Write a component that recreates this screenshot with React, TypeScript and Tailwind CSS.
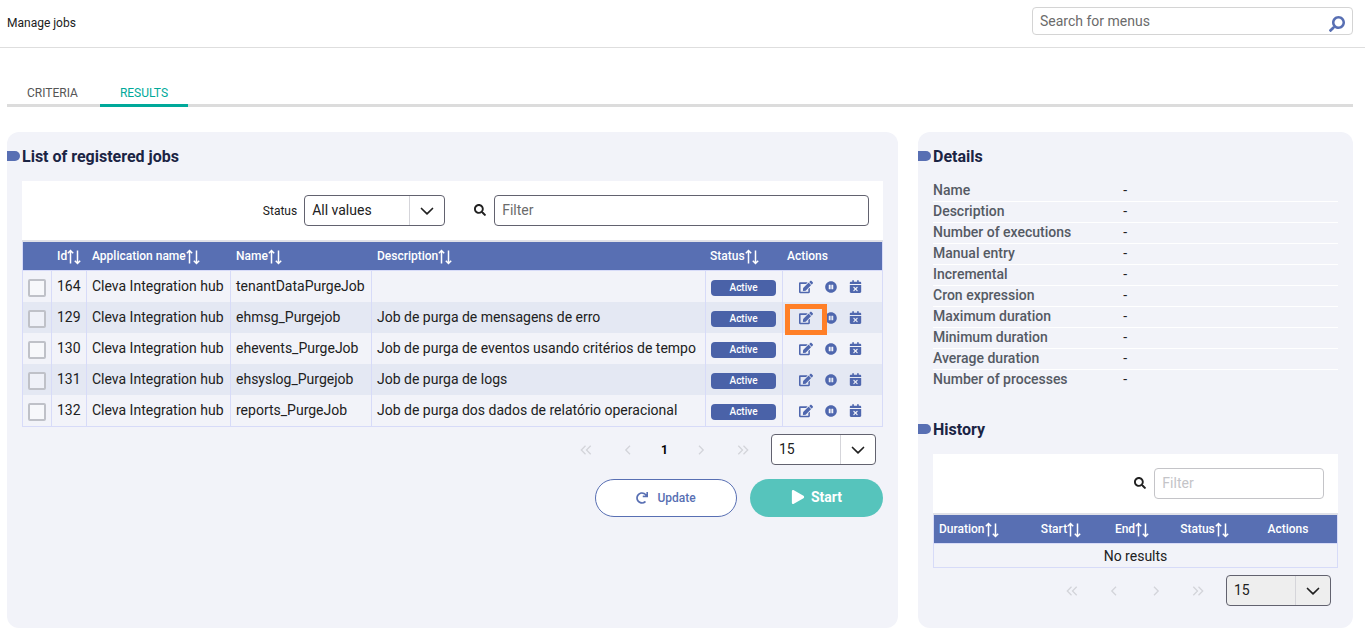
import type { ReactNode } from "react";
import { FaSearch, FaEdit, FaPauseCircle, FaPlay, FaRedo } from "react-icons/fa";
import { FaCalendarXmark } from "react-icons/fa6";

const jobs = [
  { id: 164, name: "tenantDataPurgeJob", description: "" },
  { id: 129, name: "ehmsg_Purgejob", description: "Job de purga de mensagens de erro", highlighted: true },
  { id: 130, name: "ehevents_PurgeJob", description: "Job de purga de eventos usando critérios de tempo" },
  { id: 131, name: "ehsyslog_Purgejob", description: "Job de purga de logs" },
  { id: 132, name: "reports_PurgeJob", description: "Job de purga dos dados de relatório operacional" },
];

const details = [
  "Name",
  "Description",
  "Number of executions",
  "Manual entry",
  "Incremental",
  "Cron expression",
  "Maximum duration",
  "Minimum duration",
  "Average duration",
  "Number of processes",
];

function SortIcon() {
  return (
    <svg width="14" height="16" viewBox="0 0 14 16" fill="none" stroke="currentColor" strokeWidth="1.5" className="mt-px shrink-0" aria-hidden="true">
      <path d="M3.5 14.5V1.5M0.8 4.2L3.5 1.5L6.2 4.2" />
      <path d="M10.5 1.5V14.5M7.8 11.8L10.5 14.5L13.2 11.8" />
    </svg>
  );
}

function SortHeader({ children }: { children: ReactNode }) {
  return (
    <button type="button" className="inline-flex items-center align-top h-7 font-medium">
      {children}
      <SortIcon />
    </button>
  );
}

function SectionTitle({ children }: { children: ReactNode }) {
  return (
    <div className="-ml-[15px] mb-[13px] flex h-6 items-center gap-0.5">
      <span className="h-2.5 w-[13px] rounded-r-full bg-[#586fb3]" />
      <h2 className="pt-0.5 text-base font-bold text-[#1b2444]">{children}</h2>
    </div>
  );
}

function Select({ label, value, id, muted }: { label: string; value: string; id: string; muted?: boolean }) {
  return (
    <div className="relative h-[31px] w-full">
      <select
        id={id}
        aria-label={label}
        disabled={muted}
        className={
          "h-full w-full appearance-none rounded border border-[#62626f] pb-0.5 pl-[7px] text-sm text-[#212121] opacity-100 " +
          (muted ? "bg-[#eeeeee]" : "bg-white")
        }
      >
        <option>{value}</option>
      </select>
      <span className="pointer-events-none absolute inset-y-px right-px flex w-[35px] items-center justify-center border-l border-[#d5d5da]">
        <svg width="14" height="14" viewBox="0 0 14 14" fill="none" stroke="#212121" strokeWidth="1.7" strokeLinecap="round" strokeLinejoin="round">
          <path d="M1.5 4.5L7 9.8L12.5 4.5" />
        </svg>
      </span>
    </div>
  );
}

function PageButton({ label, path }: { label: string; path: string }) {
  return (
    <button type="button" aria-label={label} className="flex h-[31px] w-[42px] items-center justify-center text-[#d3d4da]">
      <svg width="12" height="12" viewBox="0 0 12 12" fill="none" stroke="currentColor" strokeWidth="1.3">
        <path d={path} />
      </svg>
    </button>
  );
}

function Pagination({ id, page, muted }: { id: string; page?: string; muted?: boolean }) {
  return (
    <div className="mt-[7px] flex items-center justify-end pr-[7px]">
      <PageButton label="First page" path="M5.5 1.8L1.3 6L5.5 10.2M10.7 1.8L6.5 6L10.7 10.2" />
      <PageButton label="Previous page" path="M8 1.8L3.8 6L8 10.2" />
      {page && (
        <button type="button" className="h-[31px] w-[31px] text-xs font-bold text-black">
          {page}
        </button>
      )}
      <PageButton label="Next page" path="M4 1.8L8.2 6L4 10.2" />
      <PageButton label="Last page" path="M1.3 1.8L5.5 6L1.3 10.2M6.5 1.8L10.7 6L6.5 10.2" />
      <div className="ml-[7px] w-[105px]">
        <Select id={id} label="Rows per page" value="15" muted={muted} />
      </div>
    </div>
  );
}

export default function App() {
  return (
    <div className="bg-white text-sm text-[#212121] [font-family:Roboto,sans-serif]">
      <header className="flex h-12 items-start justify-between border-b border-[#dedede] pl-[7px] pr-3 pt-[7px]">
        <h1 className="text-xs leading-8">Manage jobs</h1>
        <div className="relative h-7 w-[321px]">
          <input
            type="text"
            aria-label="Search for menus"
            placeholder="Search for menus"
            className="h-full w-full rounded border border-[#d4d4d4] pl-[7px] pr-8 text-sm placeholder:text-[#6b6b6b]"
          />
          <FaSearch className="absolute right-2 top-[9px] size-4 -scale-x-100 text-[#586fb3]" />
        </div>
      </header>

      <main className="pl-[7px] pr-3">
        <nav className="mt-[34px] flex gap-0.5 border-b-[3px] border-[#dcdcdc] text-xs">
          <a href="#criteria" className="-mb-[3px] flex h-[25px] items-center px-5 pb-[3px] text-[#555555]">
            CRITERIA
          </a>
          <a href="#results" className="-mb-[3px] flex h-[25px] items-center border-b-[3px] border-[#00a99a] px-5 text-[#00a99a]">
            RESULTS
          </a>
        </nav>

        <div className="mt-[25px] grid grid-cols-[891fr_435fr] gap-5">
          <section className="rounded-xl bg-[#f2f3f9] px-[15px] pb-[22px] pt-3">
            <SectionTitle>List of registered jobs</SectionTitle>
            <div className="flex items-center justify-end border-b-2 border-[#e0e1e8] bg-white px-[14px] py-[14px]">
              <label htmlFor="status" className="mr-[7px] text-xs">
                Status
              </label>
              <div className="w-[141px]">
                <Select id="status" label="Status" value="All values" />
              </div>
              <FaSearch className="mb-0.5 ml-[29px] mr-2 size-3" />
              <input
                type="text"
                aria-label="Filter"
                placeholder="Filter"
                className="h-[31px] w-[45%] rounded border border-[#62626f] px-[7px] pb-0.5 text-sm placeholder:text-[#6b6b6b]"
              />
            </div>
            <table className="w-full table-fixed border-separate border-spacing-0 border-x border-[#d7dbf8]">
              <colgroup>
                <col className="w-[29px]" />
                <col className="w-[35px]" />
                <col className="w-36" />
                <col className="w-[141px]" />
                <col />
                <col className="w-[77px]" />
                <col className="w-[99px]" />
              </colgroup>
              <thead>
                <tr className="h-[29px] bg-[#586fb3] text-left text-xs text-white [&>th]:border-b [&>th]:border-[#d7dbf8] [&>th]:p-0 [&>th]:pl-[5px] [&>th:nth-last-child(-n+2)]:pl-1 [&>th]:font-medium">
                  <th aria-label="Select" />
                  <th><SortHeader>Id</SortHeader></th>
                  <th><SortHeader>Application name</SortHeader></th>
                  <th><SortHeader>Name</SortHeader></th>
                  <th><SortHeader>Description</SortHeader></th>
                  <th><SortHeader>Status</SortHeader></th>
                  <th>Actions</th>
                </tr>
              </thead>
              <tbody>
                {jobs.map((job) => (
                  <tr
                    key={job.id}
                    className="h-[31px] last:h-8 even:bg-[#e4e8f3] [&>td]:whitespace-nowrap [&>td]:border-r [&>td]:border-[#d7dbf8] [&>td]:px-[5px] [&>td]:pb-0.5 [&>td]:pt-0 [&>td:last-child]:border-r-0 last:[&>td]:border-b"
                  >
                    <td>
                      <input
                        type="checkbox"
                        aria-label={`Select job ${job.id}`}
                        className="mt-[5px] block size-[18px] appearance-none rounded-xs border-2 border-[#bfc1c8] bg-white/40"
                      />
                    </td>
                    <td>{job.id}</td>
                    <td>Cleva Integration hub</td>
                    <td>{job.name}</td>
                    <td>{job.description}</td>
                    <td>
                      <span className="mt-[5px] block h-4 w-[65px] rounded bg-[#4a62a8] text-center text-[10px] font-medium leading-4 text-white">
                        Active
                      </span>
                    </td>
                    <td>
                      <div className="flex items-center gap-3 pl-[11px] pt-0.5 text-[#4f67ae]">
                        <button type="button" aria-label="Edit" className="relative">
                          <FaEdit className="size-[14px]" />
                          {job.highlighted && (
                            <span className="absolute -left-[14px] -top-[7px] z-10 h-[31px] w-[42px] border-[5px] border-[#ff7f27]" />
                          )}
                        </button>
                        <button type="button" aria-label="Pause">
                          <FaPauseCircle className="size-3" />
                        </button>
                        <button type="button" aria-label="Cancel schedule">
                          <FaCalendarXmark className="size-[13px]" />
                        </button>
                      </div>
                    </td>
                  </tr>
                ))}
              </tbody>
            </table>
            <Pagination id="jobs-rows" page="1" />
            <div className="mt-[14px] flex justify-end gap-[13px]">
              <button
                type="button"
                className="flex h-[38px] w-[142px] items-center justify-center gap-[9px] rounded-full border border-[#586fb3] bg-white text-xs font-medium text-[#586fb3]"
              >
                <FaRedo className="size-3" />
                Update
              </button>
              <button
                type="button"
                className="flex h-[38px] w-[133px] items-center justify-center gap-1.5 rounded-full bg-[#56c4bc] pb-0.5 text-sm font-bold text-white"
              >
                <FaPlay className="size-[14px]" />
                Start
              </button>
            </div>
          </section>

          <section className="rounded-xl bg-[#f2f3f9] px-[15px] pb-[22px] pt-3">
            <SectionTitle>Details</SectionTitle>
            <dl>
              {details.map((name) => (
                <div key={name} className="flex h-[21px] items-start border-b border-white leading-[19px] last:border-b-0">
                  <dt className="w-[47%] font-medium text-[#555a64]">{name}</dt>
                  <dd>-</dd>
                </div>
              ))}
            </dl>
            <div className="mt-[26px]">
              <SectionTitle>History</SectionTitle>
            </div>
            <div className="flex items-center justify-end border-b-2 border-[#e0e1e8] bg-white px-[14px] py-[14px]">
              <FaSearch className="mb-0.5 mr-2 size-3" />
              <input
                type="text"
                aria-label="Filter history"
                placeholder="Filter"
                className="h-[31px] w-[45%] rounded border border-[#c4c4c8] px-[7px] pb-0.5 text-sm placeholder:text-[#c4c4c8]"
              />
            </div>
            <table className="w-full table-fixed border-separate border-spacing-0 border-x border-b border-[#d7dbf8]">
              <colgroup>
                <col className="w-[90px]" />
                <col className="w-[74px]" />
                <col className="w-[68px]" />
                <col className="w-[77px]" />
                <col />
              </colgroup>
              <thead>
                <tr className="h-[29px] bg-[#586fb3] text-xs text-white [&>th]:border-b [&>th]:border-[#d7dbf8] [&>th]:p-0 [&>th]:font-medium">
                  <th className="text-left">
                    <span className="pl-[5px]"><SortHeader>Duration</SortHeader></span>
                  </th>
                  <th><SortHeader>Start</SortHeader></th>
                  <th><SortHeader>End</SortHeader></th>
                  <th><SortHeader>Status</SortHeader></th>
                  <th><span className="pr-1">Actions</span></th>
                </tr>
              </thead>
              <tbody>
                <tr className="h-[23px]">
                  <td colSpan={5} className="p-0 text-center">No results</td>
                </tr>
              </tbody>
            </table>
            <Pagination id="history-rows" muted />
          </section>
        </div>
      </main>
    </div>
  );
}
